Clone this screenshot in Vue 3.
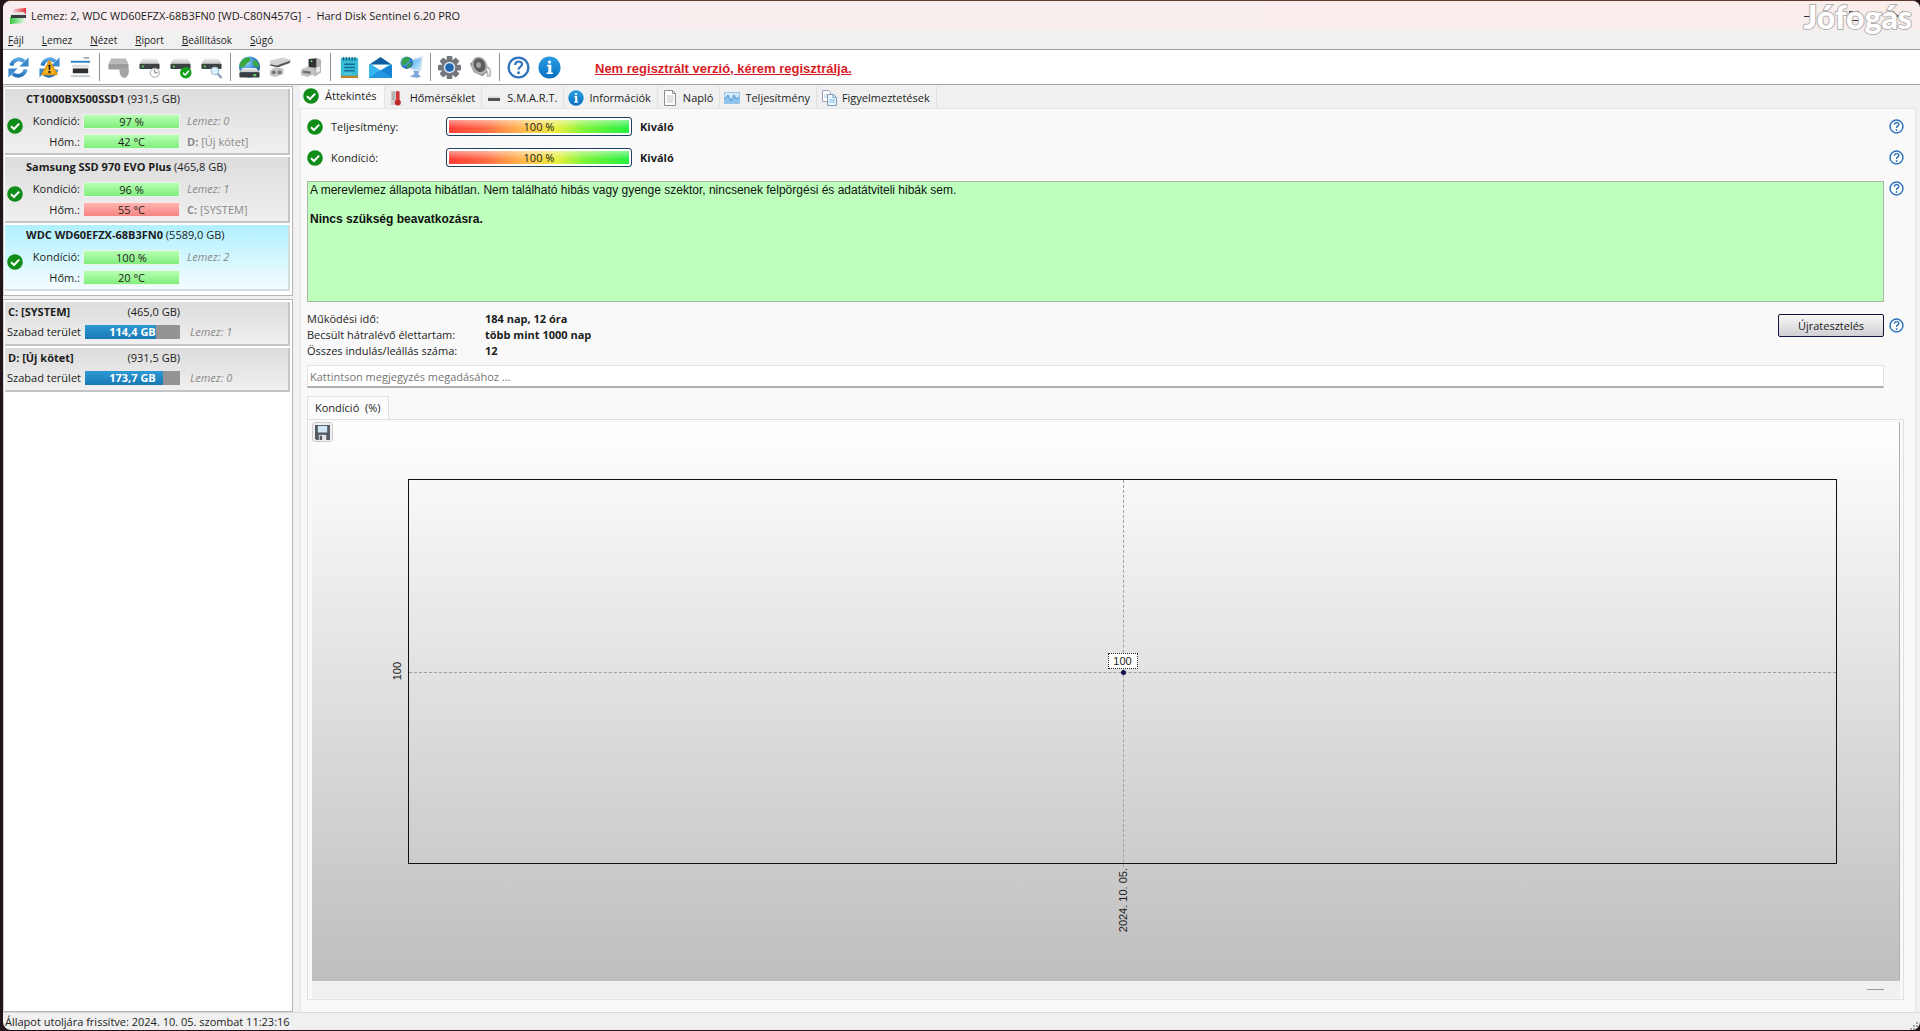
<script setup>
import { ref } from 'vue'

const menus = [
  ['F', 'ájl'], ['L', 'emez'], ['N', 'ézet'], ['R', 'iport'], ['B', 'eállítások'], ['S', 'úgó'],
]

const toolGroups = [
  [['refresh', 'Frissítés'], ['refresh-warn', 'Riasztások frissítése'], ['panels', 'Nézet']],
  [['disk-off', 'Lemez'], ['disk-clock', 'Rövid teszt'], ['disk-ok', 'Teljes teszt'], ['disk-search', 'Felületteszt']],
  [['globe-disk', 'Online'], ['dock', 'Dokkoló'], ['dock-box', 'Eszköz']],
  [['notepad', 'Riport'], ['mail', 'E-mail'], ['network', 'Hálózat']],
  [['gear', 'Beállítások'], ['speaker', 'Hang']],
  [['help', 'Súgó'], ['info', 'Névjegy']],
]

const disks = [
  { name: 'CT1000BX500SSD1', size: '(931,5 GB)', health: '97 %', temp: '42 °C', hot: false, no: 'Lemez: 0', drive: 'D:', label: '[Új kötet]' },
  { name: 'Samsung SSD 970 EVO Plus', size: '(465,8 GB)', health: '96 %', temp: '55 °C', hot: true, no: 'Lemez: 1', drive: 'C:', label: '[SYSTEM]' },
  { name: 'WDC WD60EFZX-68B3FN0', size: '(5589,0 GB)', health: '100 %', temp: '20 °C', hot: false, no: 'Lemez: 2', drive: '', label: '' },
]
const selectedDisk = ref(2)

const volumes = [
  { name: 'C: [SYSTEM]', size: '(465,0 GB)', free: '114,4 GB', used: 75, no: 'Lemez: 1' },
  { name: 'D: [Új kötet]', size: '(931,5 GB)', free: '173,7 GB', used: 82, no: 'Lemez: 0' },
]

const tabs = [
  { icon: 'check', label: 'Áttekintés' },
  { icon: 'thermo', label: 'Hőmérséklet' },
  { icon: 'smart', label: 'S.M.A.R.T.' },
  { icon: 'info', label: 'Információk' },
  { icon: 'page', label: 'Napló' },
  { icon: 'perf', label: 'Teljesítmény' },
  { icon: 'pages', label: 'Figyelmeztetések' },
]
const activeTab = ref(0)

const ratings = ['Teljesítmény:', 'Kondíció:']
const facts = [
  ['Működési idő:', '184 nap, 12 óra'],
  ['Becsült hátralévő élettartam:', 'több mint 1000 nap'],
  ['Összes indulás/leállás száma:', '12'],
]
const note = ref('')
</script>

<template>
  <svg class="sprite" aria-hidden="true">
    <defs>
      <linearGradient id="g-lid" x1="0" y1="0" x2="0" y2="1"><stop offset="0" stop-color="#f2f2f2" /><stop offset="1" stop-color="#c4c4c4" /></linearGradient>
      <linearGradient id="g-blue" x1="0" y1="0" x2="0" y2="1"><stop offset="0" stop-color="#5aa7e0" /><stop offset="1" stop-color="#2470b8" /></linearGradient>
      <linearGradient id="g-info" x1="0" y1="0" x2="0" y2="1"><stop offset="0" stop-color="#2a9de4" /><stop offset="1" stop-color="#0a6fc0" /></linearGradient>
      <radialGradient id="g-globe" cx="0.35" cy="0.3" r="0.8"><stop offset="0" stop-color="#8fd0ff" /><stop offset="0.6" stop-color="#2f7fc8" /><stop offset="1" stop-color="#134a8a" /></radialGradient>
      <linearGradient id="g-screen" x1="0" y1="0" x2="1" y2="1"><stop offset="0" stop-color="#4fa8f0" /><stop offset="1" stop-color="#c4ecff" /></linearGradient>
      <linearGradient id="g-app" x1="0" y1="0" x2="1" y2="0"><stop offset="0" stop-color="#fbe0e0" /><stop offset="1" stop-color="#e02838" /></linearGradient>
      <linearGradient id="g-app2" x1="0" y1="0" x2="1" y2="0"><stop offset="0" stop-color="#30c840" /><stop offset="1" stop-color="#e4f8e4" /></linearGradient>
    </defs>
    <symbol id="i-app" viewBox="0 0 16 16">
      <path d="M2 6 L4 1 L16 0 V6z" fill="url(#g-app)" /><path d="M0 9H14L15 15 0 16z" fill="url(#g-app2)" />
      <path d="M3 4H14L16 7H1z" fill="#e2e2e2" /><rect x="1" y="7" width="15" height="3" fill="#383c40" />
    </symbol>
    <symbol id="i-refresh" viewBox="0 0 24 24">
      <path d="M4.5 10A8.2 8.2 0 0 1 18 5.6" fill="none" stroke="url(#g-blue)" stroke-width="4" />
      <path d="M22.500 1.500V11H13z" fill="#3a88cc" />
      <path d="M19.500 14A8.200 8.200 0 0 1 6 18.400" fill="none" stroke="url(#g-blue)" stroke-width="4" />
      <path d="M1.500 22.500V13H11z" fill="#3a88cc" />
    </symbol>
    <symbol id="i-refresh-warn" viewBox="0 0 24 24">
      <use href="#i-refresh" /><path d="M12 5.500 19.500 19H4.500z" fill="#fbb628" stroke="#e79a10" stroke-width="2" stroke-linejoin="round" />
      <path d="M10.800 9h2.400l-.5 5.500h-1.400z" fill="#222" /><circle cx="12" cy="16.800" r="1.300" fill="#222" />
    </symbol>
    <symbol id="i-panels" viewBox="0 0 24 24">
      <path d="M15 2h6" stroke="#666" /><rect x="2" y="5" width="20" height="2" fill="#2f83c5" />
      <path d="M4 9h16l2 3H2z" fill="#dedede" /><rect x="4" y="13" width="16" height="5" fill="#2c2f31" /><rect x="2" y="20" width="20" height="2" fill="#c3ccd1" />
    </symbol>
    <symbol id="i-drive" viewBox="0 0 24 24">
      <path d="M4.500 2.500h15L22.500 8h-21z" fill="url(#g-lid)" /><rect x="1.500" y="8" width="21" height="5.500" rx="1" fill="#3e4144" /><rect x="4" y="10" width="2" height="2" fill="#58d850" />
    </symbol>
    <symbol id="i-disk-off" viewBox="0 0 24 24">
      <path d="M4.500 2.500h15L22.500 8h-21z" fill="#b8b8b8" /><rect x="1.500" y="8" width="21" height="6" rx="1" fill="#9c9c9c" />
      <path d="M13 14c3 0 4-1 5-2 1 1 2.500 2 5 2 0 5-1.500 8-5 9-3.500-1-5-4-5-9z" fill="#a4a4a4" />
    </symbol>
    <symbol id="i-disk-clock" viewBox="0 0 24 24">
      <use href="#i-drive" /><circle cx="17.500" cy="17.500" r="4.800" fill="#fafafa" stroke="#aaa" /><path d="M17.500 14v3.500h3" fill="none" stroke="#777" />
    </symbol>
    <symbol id="i-check" viewBox="0 0 16 16">
      <circle cx="8" cy="8" r="7.800" fill="#108c18" /><path d="M4 8.200 7 11l5.200-5.400" fill="none" stroke="#fff" stroke-width="2" />
    </symbol>
    <symbol id="i-disk-ok" viewBox="0 0 24 24">
      <use href="#i-drive" /><circle cx="17.500" cy="17.500" r="6" fill="#12a01c" /><path d="m14.500 17.500 2.300 2.300 4-4.300" fill="none" stroke="#fff" stroke-width="1.600" />
    </symbol>
    <symbol id="i-disk-search" viewBox="0 0 24 24">
      <use href="#i-drive" /><path d="m18 18 4.500 5" stroke="#8aa0c0" stroke-width="2.500" /><circle cx="15.500" cy="15.500" r="4" fill="#d9f2ff" stroke="#9ab4cc" />
    </symbol>
    <symbol id="i-globe-disk" viewBox="0 0 24 24">
      <circle cx="12" cy="11.500" r="11" fill="url(#g-globe)" /><path d="M4 5c3-4 8-4 9-2s-2 3-4 5-3 4-6 4-1-5 1-7zM17 4c3 1 5 5 5 8l-4-1-3-3z" fill="#3aa83e" />
      <path d="M5 12.500h14l3.500 4.500h-21z" fill="url(#g-lid)" /><rect x="1.500" y="17" width="21" height="5.500" rx="1" fill="#3a3d40" /><rect x="16" y="19" width="3" height="2" fill="#62e05a" />
    </symbol>
    <symbol id="i-dock" viewBox="0 0 24 24">
      <path d="M1 5 14 1.500 23 4 21 8 9 11 1 9z" fill="#d2d2d2" /><path d="M1 8.500 8 10l14-5v2L9 12 1 10z" fill="#55585a" />
      <path d="M1 15.500 6 12l9 1v6l-9 3-5-2z" fill="#c1c1c1" /><circle cx="5" cy="17" r="2" fill="#767676" /><circle cx="11" cy="17" r="2" fill="#767676" />
    </symbol>
    <symbol id="i-dock-box" viewBox="0 0 24 24">
      <path d="M9 3l9-1 4 2v13l-6 4-7-3z" fill="#b5b5b5" /><path d="M9 3l8-.5V12H9z" fill="#303336" /><circle cx="12" cy="5.500" r="1" fill="#66e065" />
      <path d="M1 14l7-3 7 2v6l-7 3-7-2z" fill="#c4c4c4" /><path d="M3 16.500l8 1" stroke="#707070" stroke-width="2.500" /><path d="M17 12l4-1v5l-4 2z" fill="#ececec" />
    </symbol>
    <symbol id="i-notepad" viewBox="0 0 24 24">
      <rect x="3" y="2" width="18" height="20" fill="#39bcd8" /><rect x="3" y="20.500" width="18" height="2.500" fill="#b8862c" />
      <path d="M5 3h15" stroke="#136a85" stroke-width="4" stroke-dasharray="1.500 1.500" /><path d="M6.500 8.500h11M6.500 12h11M6.500 15.500h11" stroke="#146c94" stroke-width="1.600" /><path d="M6.500 18.500h8" stroke="#62d3e8" />
    </symbol>
    <symbol id="i-mail" viewBox="0 0 24 24">
      <path d="M0 9 12 1l12 8z" fill="#0e5ea0" /><path d="M0 9h24v14H0z" fill="#35b6ef" /><path d="M3 9h18L12 15z" fill="#fff" />
      <path d="M24 9v14L12 15z" fill="#1583d0" /><path d="M0 23 12 14.500 24 23z" fill="#2396df" />
    </symbol>
    <symbol id="i-network" viewBox="0 0 24 24">
      <path d="m8 4 16-4-2 16L11 14z" fill="#d4dfe8" /><path d="m10 5.500 12-3.500-1.500 12.500L12 13z" fill="url(#g-screen)" /><path d="m14 15 6 1-1 3 3 2-4 2-8-2 5-2z" fill="#7fa6dc" />
      <circle cx="7" cy="7" r="6.500" fill="url(#g-globe)" /><path d="M3 3c3-3 7-2 7 0S7 8 3 10C1 8 1 5 3 3zM8 8l4-1-1 4-4 2z" fill="#36a046" />
    </symbol>
    <symbol id="i-gear" viewBox="0 0 24 24">
      <g fill="#73777c"><rect x="9" y="0" width="6" height="24" rx="1" /><rect x="9" y="0" width="6" height="24" rx="1" transform="rotate(45 12 12)" /><rect x="9" y="0" width="6" height="24" rx="1" transform="rotate(90 12 12)" /><rect x="9" y="0" width="6" height="24" rx="1" transform="rotate(135 12 12)" /><circle cx="12" cy="12" r="8.500" /></g>
      <circle cx="12" cy="12" r="6" fill="#dfe8f2" /><circle cx="12" cy="12" r="4.500" fill="#1d66b0" />
    </symbol>
    <symbol id="i-speaker" viewBox="0 0 24 24">
      <path d="M19 11c4 3 4 7 2 11M17 14c3 2 3 5 2 8" fill="none" stroke="#bcbcbc" stroke-width="1.800" /><path d="M7 2 1 8l4 9 9 4 5-4z" fill="#8d8d8d" />
      <ellipse cx="11" cy="10" rx="8" ry="9.500" fill="#b3b3b3" transform="rotate(-25 11 10)" /><ellipse cx="11" cy="9.500" rx="6" ry="7.500" fill="#5c5c5c" transform="rotate(-25 11 9.500)" /><ellipse cx="10" cy="9.500" rx="2.500" ry="3" fill="#a5a5a5" />
    </symbol>
    <symbol id="i-help" viewBox="0 0 24 24">
      <circle cx="12" cy="12" r="10.300" fill="#fff" stroke="#2f74bd" stroke-width="2.400" /><path d="M8.500 9.300c0-4.800 7.200-4.600 7.200-.6 0 2.800-3.700 2.700-3.700 5.600" fill="none" stroke="#2f74bd" stroke-width="2.200" /><circle cx="12" cy="17.500" r="1.500" fill="#2f74bd" />
    </symbol>
    <symbol id="i-info" viewBox="0 0 24 24">
      <circle cx="12" cy="12" r="11.500" fill="url(#g-info)" /><circle cx="12" cy="6.300" r="1.700" fill="#fff" /><path d="M9.500 10h3.500v7.500M9 18h6.500" fill="none" stroke="#fff" stroke-width="1.800" /><rect x="10.800" y="9.500" width="2.600" height="9" fill="#fff" />
    </symbol>
    <symbol id="i-thermo" viewBox="0 0 16 16">
      <rect x="2" y="1" width="8" height="14" fill="#d4cccc" /><path d="M3 3h3M3 5h3M3 7h3M3 9h3" stroke="#888" stroke-width="0.800" /><rect x="7" y="1" width="3.600" height="10" rx="1.500" fill="#c83838" /><circle cx="8.800" cy="12.500" r="3" fill="#c02828" />
    </symbol>
    <symbol id="i-smart" viewBox="0 0 16 16"><path d="M3 6h10l1 2H2z" fill="#ddd" /><rect x="2" y="8" width="12" height="3" fill="#505356" /></symbol>
    <symbol id="i-page" viewBox="0 0 16 16">
      <path d="M2.500.5h8l3 3v12h-11z" fill="#fff" stroke="#8d8d8d" /><path d="M10.500.5v3h3" fill="none" stroke="#8d8d8d" /><path d="M4.500 6h7M4.500 8h7M4.500 10h7M4.500 12h7" stroke="#c4c4c4" />
    </symbol>
    <symbol id="i-perf" viewBox="0 0 16 16">
      <rect x=".5" y="2.500" width="15" height="11" fill="#cfe8fa" stroke="#9cc4e4" /><path d="M1 13V9l3-4 3 6 3-6 2 4 3-2v6z" fill="#8cc4ee" /><path d="m1 9 3-4 3 6 3-6 2 4 3-2" fill="none" stroke="#4d97d0" />
    </symbol>
    <symbol id="i-pages" viewBox="0 0 16 16">
      <path d="M1.500.5h6l2 2v9h-8z" fill="#fff" stroke="#93a3b3" /><path d="M3 5h4M3 7h3" stroke="#b5c4d2" /><path d="M6.500 4.500h6l3 3v8h-9z" fill="#eaf6ff" stroke="#809ab2" /><path d="M12 4.500v3h3" fill="none" stroke="#809ab2" /><path d="M8 10h6M8 12h6" stroke="#7fbbe8" />
    </symbol>
    <symbol id="i-save" viewBox="0 0 16 16">
      <path d="M0 0h16v16H1.500L0 14.500z" fill="#545a62" /><rect x="3" y="1" width="10" height="7" fill="#cfe6f4" /><rect x="4" y="10.500" width="8" height="5.500" fill="#e4e4e4" /><rect x="5" y="11.500" width="2.500" height="4.500" fill="#545a62" />
    </symbol>
  </svg>

  <div class="window">
    <header class="titlebar">
      <svg class="app-icon"><use href="#i-app" /></svg>
      <h1>Lemez: 2, WDC WD60EFZX-68B3FN0 [WD-C80N457G]&nbsp; -&nbsp; Hard Disk Sentinel 6.20 PRO</h1>
      <div class="controls">
        <button aria-label="Kis méret"><svg viewBox="0 0 12 12"><path d="M0 6.500h12" /></svg></button>
        <button aria-label="Teljes méret"><svg viewBox="0 0 12 12"><path d="M1.500 1.500h9v9h-9z" /></svg></button>
        <button aria-label="Bezárás"><svg viewBox="0 0 12 12"><path d="m1 1 10 10M11 1 1 11" /></svg></button>
      </div>
      <span class="watermark">Jófogás</span>
    </header>

    <nav class="menubar">
      <button v-for="m in menus" :key="m[1]"><u>{{ m[0] }}</u>{{ m[1] }}</button>
    </nav>

    <div class="toolbar">
      <div v-for="(group, g) in toolGroups" :key="g" class="tool-group">
        <button v-for="t in group" :key="t[0]" :aria-label="t[1]"><svg><use :href="'#i-' + t[0]" /></svg></button>
      </div>
      <a class="register" href="#">Nem regisztrált verzió, kérem regisztrálja.</a>
    </div>

    <div class="body">
      <aside class="side">
        <section class="pane disks">
          <article v-for="(d, i) in disks" :key="d.name" class="disk" :class="{ selected: i === selectedDisk }" @click="selectedDisk = i">
            <h2>{{ d.name }} <span>{{ d.size }}</span></h2>
            <svg class="status"><use href="#i-check" /></svg>
            <span class="label">Kondíció:</span><span class="level">{{ d.health }}</span><em>{{ d.no }}</em>
            <span class="label">Hőm.:</span><span class="level" :class="{ hot: d.hot }">{{ d.temp }}</span>
            <span class="drive"><b>{{ d.drive }}</b> {{ d.label }}</span>
          </article>
        </section>
        <section class="pane volumes">
          <article v-for="v in volumes" :key="v.name" class="volume">
            <h2>{{ v.name }}</h2><span class="size">{{ v.size }}</span>
            <span class="label">Szabad terület</span>
            <span class="space"><i :style="{ width: v.used + '%' }"></i><b>{{ v.free }}</b></span>
            <em>{{ v.no }}</em>
          </article>
        </section>
      </aside>

      <main class="main">
        <div class="tabs" role="tablist">
          <button v-for="(t, i) in tabs" :key="t.label" role="tab" :aria-selected="i === activeTab" :class="{ active: i === activeTab }" @click="activeTab = i">
            <svg><use :href="'#i-' + t.icon" /></svg>{{ t.label }}
          </button>
        </div>

        <div class="sheet">
          <div v-for="r in ratings" :key="r" class="row rating">
            <svg class="status"><use href="#i-check" /></svg>
            <span class="rating-label">{{ r }}</span>
            <span class="gauge">100 %</span>
            <b>Kiváló</b>
            <button class="help" aria-label="Súgó"><svg><use href="#i-help" /></svg></button>
          </div>

          <div class="row message">
            <div class="message-box">
              <p>A merevlemez állapota hibátlan. Nem található hibás vagy gyenge szektor, nincsenek felpörgési és adatátviteli hibák sem.</p>
              <p><b>Nincs szükség beavatkozásra.</b></p>
            </div>
            <button class="help" aria-label="Súgó"><svg><use href="#i-help" /></svg></button>
          </div>

          <div class="row facts-row">
            <dl class="facts">
              <template v-for="f in facts" :key="f[0]"><dt>{{ f[0] }}</dt><dd>{{ f[1] }}</dd></template>
            </dl>
            <button class="retest">Újratesztelés</button>
            <button class="help" aria-label="Súgó"><svg><use href="#i-help" /></svg></button>
          </div>

          <input v-model="note" class="note" type="text" aria-label="Megjegyzés" placeholder="Kattintson megjegyzés megadásához ...">

          <div class="chart-tabs"><button>Kondíció&nbsp; (%)</button></div>
          <div class="chart-frame">
            <div class="chart">
              <button class="save" aria-label="Mentés"><svg><use href="#i-save" /></svg></button>
              <span class="y-label">100</span>
              <div class="plot">
                <span class="h-line"></span><span class="v-line"></span><span class="dot"></span><span class="tip">100</span>
              </div>
              <span class="x-label">2024. 10. 05.</span>
            </div>
            <div class="strip"><span></span></div>
          </div>
        </div>
      </main>
    </div>

    <footer class="statusbar">
      <span>Állapot utoljára frissítve: 2024. 10. 05. szombat 11:23:16</span>
      <svg class="grip" viewBox="0 0 8 8"><path d="M6 0h2v2H6zM6 3h2v2H6zM3 3h2v2H3zM6 6h2v2H6zM3 6h2v2H3zM0 6h2v2H0z" /></svg>
    </footer>
  </div>
</template>

<style>
body { background: #21141a; }
</style>

<style scoped>
* { box-sizing: border-box; }
.sprite { position: absolute; width: 0; height: 0; }
button { padding: 0; border: 0; background: none; font: inherit; color: inherit; }
h1, h2, p, dl, dd { margin: 0; font-size: inherit; }
svg { display: block; }
.window {
  display: flex; flex-direction: column; min-height: calc(100vh - 1px); margin: 0 0 0 3px;
  border-top: 1px solid #66382f; border-radius: 8px; overflow: hidden; background: #f0f0f0;
  font: 11px/16px "Open Sans", "Noto Sans", sans-serif; color: #1c1c1c;
}

.titlebar { position: relative; display: flex; align-items: center; height: 29px; padding: 0 16px 0 7px; background: linear-gradient(90deg, #f7edf0, #f9eeeb); }
.app-icon { width: 16px; height: 16px; margin-right: 5px; }
.titlebar h1 { font-size: 11px; font-weight: 400; }
.controls { display: flex; gap: 32px; margin-left: auto; }
.controls svg { width: 12px; height: 12px; fill: none; stroke: #333; }
.watermark { position: absolute; right: 8px; top: 0; font: 900 32px/32px Lato, sans-serif; color: #fff; -webkit-text-stroke: 2px #b4b0b0; paint-order: stroke fill; }

.menubar { display: flex; gap: 18px; height: 20px; padding: 0 5px; border-bottom: 1px solid #a0a0a0; font-size: 10px; }

.toolbar { display: flex; align-items: center; height: 35px; background: #fff; border-bottom: 1px solid #a0a0a0; }
.tool-group { display: flex; }
.tool-group + .tool-group { margin-left: 3px; padding-left: 3px; border-left: 1px solid #909090; }
.tool-group button { display: grid; place-items: center; width: 31px; height: 28px; }
.tool-group svg { width: 23px; height: 23px; }
.register { margin: 3px 0 0 30px; font: 700 13px/16px "Liberation Sans", Arial, sans-serif; color: #d81c24; }

.body { flex: 1; display: flex; min-height: 0; }
.side { display: flex; flex-direction: column; gap: 3px; width: 290px; padding-top: 1px; }
.pane { border: 1px solid #b4b4b4; border-left-color: #d0d0d0; background: #fff; padding: 2px 2px 4px 1px; display: flex; flex-direction: column; gap: 2px; }
.volumes { flex: 1; }
.disk { display: grid; grid-template-columns: 17px 54px 95px 1fr; grid-template-rows: 20px 24px 17px; column-gap: 4px; align-items: center; height: 66px; background: linear-gradient(#dcdcdc, #f0f0f0); border-right: 2px solid #c4c4c4; border-bottom: 2px solid #c4c4c4; }
.disk.selected { background: linear-gradient(#b0f0fe, #f4fcff); border-color: #d4dde0; }
.disk h2 { grid-column: 1 / -1; padding-left: 21px; font-weight: 700; }
.disk h2 span { font-weight: 400; }
.disk .status { grid-row: 2 / 4; width: 16px; height: 16px; margin: 0 0 8px 2px; }
.label { text-align: right; white-space: nowrap; }
.level { height: 13px; line-height: 13px; text-align: center; background: linear-gradient(#b8ffb4, #80ee7c); box-shadow: 0 0 0 1px #e8f8e8; }
.level.hot { background: linear-gradient(#ffb4b0, #f48480); box-shadow: 0 0 0 1px #fbe8e8; }
em, .drive { padding-left: 4px; color: #8a8a8a; }
.volume { display: grid; grid-template-columns: 76px 95px 1fr; grid-template-rows: 19px 22px; column-gap: 4px; align-items: center; height: 44px; background: linear-gradient(#dcdcdc, #f0f0f0); border-right: 2px solid #c4c4c4; border-bottom: 2px solid #c4c4c4; }
.volume h2 { padding-left: 3px; font-weight: 700; white-space: nowrap; }
.volume .size { grid-column: 2 / 4; width: 95px; text-align: right; }
.volume em { padding-left: 6px; }
.space { position: relative; height: 14px; line-height: 14px; text-align: center; color: #fff; background: #949494; }
.space i { position: absolute; inset: 0 auto 0 0; background: linear-gradient(#2c9ad4, #1878b4); }
.space b { position: relative; }

.main { flex: 1; display: flex; flex-direction: column; min-width: 0; padding: 1px 4px 0 7px; }
.tabs { display: flex; height: 22px; }
.tabs button { display: flex; align-items: center; gap: 5px; padding: 2px 6px 0 4px; border-right: 1px solid #e2e2e2; white-space: nowrap; }
.tabs button.active { gap: 6px; padding: 0 7px 2px 3px; background: #f9f9f9; }
.tabs svg { width: 16px; height: 16px; }
.sheet { flex: 1; display: flex; flex-direction: column; padding: 2px 11px 12px 6px; border: 1px solid #e4e4e4; border-bottom: 0; background: #f9f9f9; }
.row { display: flex; align-items: center; }
.help { margin-left: auto; }
.help svg { width: 15px; height: 15px; }
.rating { height: 31px; }
.rating .status { width: 16px; height: 16px; }
.rating-label { width: 115px; margin-left: 8px; }
.gauge { width: 186px; height: 19px; margin-right: 8px; border: 1px solid #20405c; border-radius: 3px; line-height: 13px; text-align: center; background: linear-gradient(#fff9, #fff0 60%), linear-gradient(90deg, #ff3c34, #ff6844 20%, #ffc850 45%, #e8f040 60%, #7cf438 75%, #20f040); box-shadow: inset 0 0 0 2px #fff; padding-top: 2px; }
.message { align-items: flex-start; gap: 5px; padding-top: 8px; }
.message-box { flex: 1; height: 121px; padding: 1px 2px; border: 1px solid #a4b8a4; background: #beffbe; font: 12px/15px "Liberation Sans", Arial, sans-serif; color: #111; }
.message-box p + p { margin-top: 14px; }
.facts-row { align-items: flex-start; gap: 5px; padding-top: 9px; }
.facts { flex: 1; display: grid; grid-template-columns: 178px 1fr; line-height: 16px; }
.facts dd { font-weight: 700; }
.retest { width: 106px; height: 23px; margin-top: 3px; border: 1px solid #101840; border-radius: 2px; background: linear-gradient(#f8f8f8, #d0d0d4); }
.facts-row .help { margin-top: 7px; }
.note { height: 23px; margin: 6px 20px 0 0; padding: 0 2px; border: 1px solid #e4e4e4; border-bottom: 2px solid #b0b0b0; background: #fff; font: inherit; outline: 0; }
.note::placeholder { color: #757575; opacity: 1; }
.chart-tabs { display: flex; margin-top: 8px; }
.chart-tabs button { height: 23px; padding: 0 7px; border: 1px solid #e0e0e0; border-bottom: 0; background: #fcfcfc; }
.chart-frame { flex: 1; display: flex; flex-direction: column; padding: 2px 3px 1px 4px; border: 1px solid #e0e0e0; }
.chart { position: relative; flex: 1; display: grid; grid-template: 57px minmax(200px, 1fr) 117px / 96px 1fr 62px; background: linear-gradient(#fff, #bebebe); border-right: 1px solid #b0b0b0; font: 11px/14px "Liberation Sans", Arial, sans-serif; }
.save { display: grid; place-items: center; width: 21px; height: 20px; border: 1px solid #ccc; border-radius: 3px; background: #f0f0f0; }
.save svg { width: 15px; height: 15px; }
.y-label { grid-area: 2 / 1; place-self: center end; margin-right: 4px; writing-mode: vertical-rl; transform: rotate(180deg); }
.plot { grid-area: 2 / 2; position: relative; border: 1px solid #111; }
.h-line { position: absolute; inset: 50% 0 auto; border-top: 1px dashed #a0a0a0; }
.v-line { position: absolute; inset: 0 auto -4px 50%; border-left: 1px dashed #a0a0a0; }
.dot { position: absolute; left: calc(50% - 2px); top: calc(50% - 2px); width: 5px; height: 5px; border-radius: 50%; background: #101050; }
.tip { position: absolute; left: calc(50% - 15px); bottom: calc(50% + 3px); width: 30px; height: 16px; border: 1px dotted #222; background: #fff; text-align: center; }
.x-label { grid-area: 3 / 2; justify-self: center; align-self: start; margin-top: 4px; writing-mode: vertical-rl; transform: rotate(180deg); }
.strip { display: flex; justify-content: flex-end; align-items: center; height: 17px; padding-right: 16px; background: #f0f0f0; }
.strip span { width: 17px; height: 1px; background: #999; }

.statusbar { display: flex; justify-content: space-between; align-items: center; height: 18px; padding: 0 2px; border-top: 1px solid #d8d8d8; }
.grip { width: 8px; height: 8px; margin-top: 8px; fill: #aaa; }
</style>
